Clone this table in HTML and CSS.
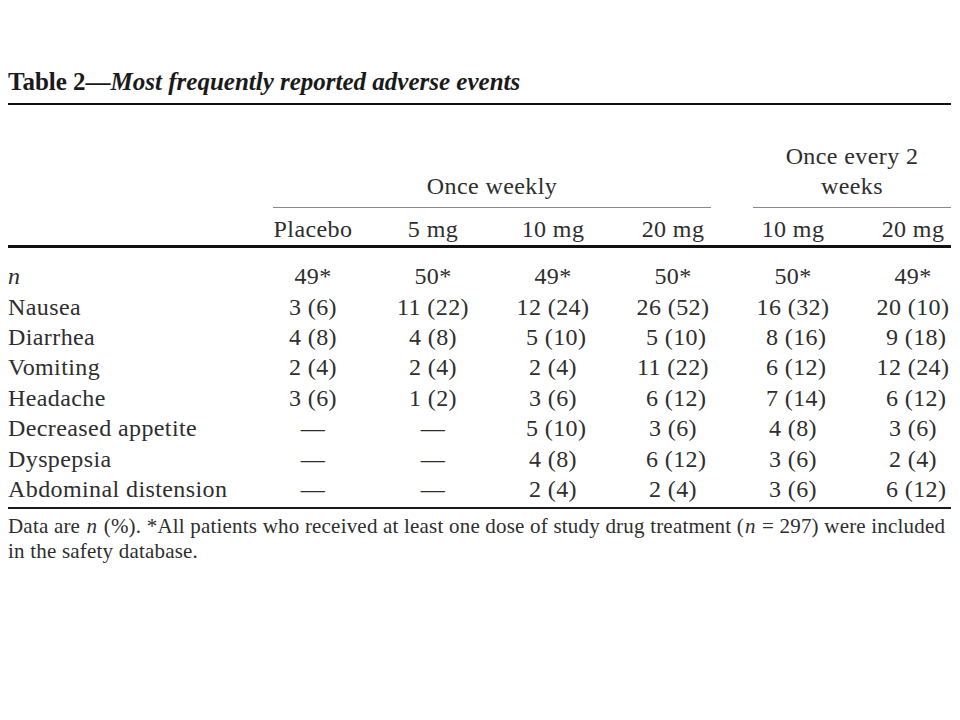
FILE: index.html
```html
<!DOCTYPE html>
<html lang="en">
<head>
<meta charset="utf-8">
<title>Table 2 — Most frequently reported adverse events</title>
<link rel="stylesheet" href="styles.css">
</head>
<body>
<div class="page">
  <h1 class="title"><span class="lead">Table 2—</span><em>Most frequently reported adverse events</em></h1>

  <div class="grid groups">
    <div class="group g1"><span>Once weekly</span></div>
    <div class="group g2"><span>Once every 2<br>weeks</span></div>
  </div>

  <div class="grid doses">
    <div></div>
    <div class="v">Placebo</div>
    <div class="v">5 mg</div>
    <div class="v">10 mg</div>
    <div class="v">20 mg</div>
    <div class="v">10 mg</div>
    <div class="v c6">20 mg</div>
  </div>

  <div class="body">
    <div class="grid row">
      <div class="lbl"><i>n</i></div>
      <div class="v">49*</div><div class="v">50*</div><div class="v">49*</div><div class="v">50*</div><div class="v">50*</div><div class="v c6">49*</div>
    </div>
    <div class="grid row">
      <div class="lbl">Nausea</div>
      <div class="v"> 3 (6) </div><div class="v">11 (22)</div><div class="v">12 (24)</div><div class="v">26 (52)</div><div class="v">16 (32)</div><div class="v c6">20 (10)</div>
    </div>
    <div class="grid row">
      <div class="lbl">Diarrhea</div>
      <div class="v"> 4 (8) </div><div class="v"> 4 (8) </div><div class="v"> 5 (10)</div><div class="v"> 5 (10)</div><div class="v"> 8 (16)</div><div class="v c6"> 9 (18)</div>
    </div>
    <div class="grid row">
      <div class="lbl">Vomiting</div>
      <div class="v"> 2 (4) </div><div class="v"> 2 (4) </div><div class="v"> 2 (4) </div><div class="v">11 (22)</div><div class="v"> 6 (12)</div><div class="v c6">12 (24)</div>
    </div>
    <div class="grid row">
      <div class="lbl">Headache</div>
      <div class="v"> 3 (6) </div><div class="v"> 1 (2) </div><div class="v"> 3 (6) </div><div class="v"> 6 (12)</div><div class="v"> 7 (14)</div><div class="v c6"> 6 (12)</div>
    </div>
    <div class="grid row">
      <div class="lbl">Decreased appetite</div>
      <div class="v">—</div><div class="v">—</div><div class="v"> 5 (10)</div><div class="v"> 3 (6) </div><div class="v"> 4 (8) </div><div class="v c6"> 3 (6) </div>
    </div>
    <div class="grid row">
      <div class="lbl">Dyspepsia</div>
      <div class="v">—</div><div class="v">—</div><div class="v"> 4 (8) </div><div class="v"> 6 (12)</div><div class="v"> 3 (6) </div><div class="v c6"> 2 (4) </div>
    </div>
    <div class="grid row">
      <div class="lbl">Abdominal distension</div>
      <div class="v">—</div><div class="v">—</div><div class="v"> 2 (4) </div><div class="v"> 2 (4) </div><div class="v"> 3 (6) </div><div class="v c6"> 6 (12)</div>
    </div>
  </div>

  <p class="note">Data are <i>n</i> (%). *All patients who received at least one dose of study drug treatment (<i>n</i> = 297) were included<br>in the safety database.</p>
</div>
</body>
</html>
```

FILE: styles.css
```css
html, body {
  margin: 0;
  padding: 0;
  background: #ffffff;
}

.page {
  width: 943px;
  margin-left: 8px;
  font-family: "Liberation Serif", "Times New Roman", serif;
  color: #2e2e2e;
}

.title {
  margin: 0;
  padding-top: 67px;
  padding-bottom: 6px;
  font-size: 25px;
  line-height: 30px;
  font-weight: bold;
  color: #1a1a1a;
  border-bottom: 2px solid #111;
  white-space: nowrap;
}

.title em {
  font-style: italic;
}

.grid {
  display: grid;
  grid-template-columns: 245px repeat(5, 120px) 98px;
  font-size: 24px;
  line-height: 30.4px;
  letter-spacing: 0.4px;
}

.groups {
  padding-top: 36px;
  align-items: end;
}

.group {
  text-align: center;
  padding-bottom: 5px;
  border-bottom: 1px solid #8a8a8a;
}

.g1 {
  grid-column: 2 / 6;
  margin: 0 22px 0 20px;
}

.g2 {
  grid-column: 6 / 8;
  margin-left: 20px;
}

.doses {
  padding-top: 6px;
  padding-bottom: 1px;
  border-bottom: 3px solid #111;
}

.v {
  text-align: center;
  white-space: pre;
}

.c6 {
  padding-left: 22px;
}

.body {
  padding-top: 13px;
  padding-bottom: 3px;
  border-bottom: 2px solid #1a1a1a;
}

.lbl {
  white-space: nowrap;
}

.note {
  margin: 0;
  padding-top: 5px;
  font-size: 21px;
  line-height: 25px;
  letter-spacing: 0.2px;
  color: #2e2e2e;
}

.note i {
  margin: 0 1px;
}
```
